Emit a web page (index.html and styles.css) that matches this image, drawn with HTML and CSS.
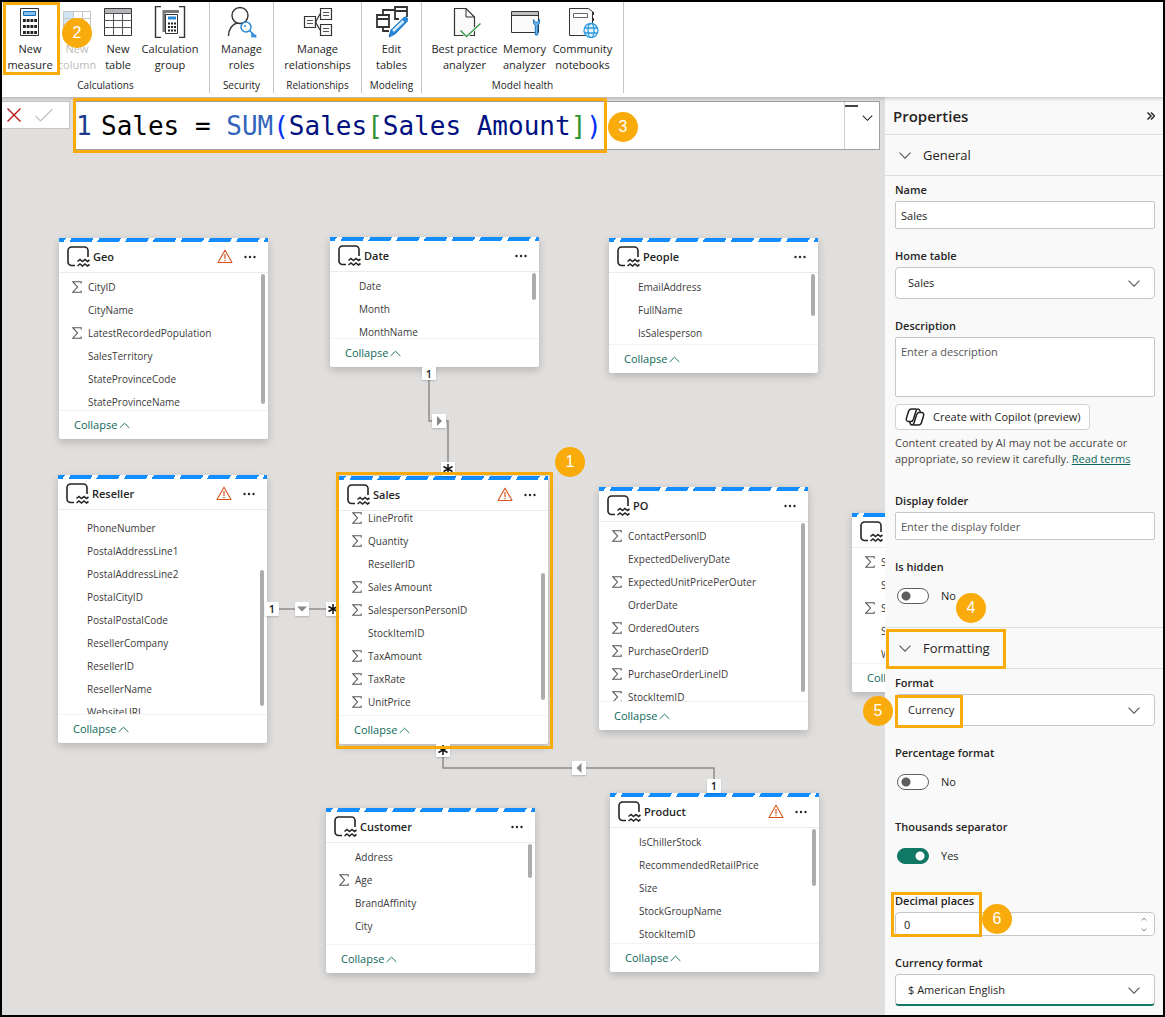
FILE: index.html
```html
<!DOCTYPE html>
<html lang="en">
<head>
<meta charset="utf-8">
<title>Model view</title>
<link rel="stylesheet" href="styles.css">
</head>
<body>
<svg class="sprite" aria-hidden="true">
  <symbol id="i-table" viewBox="0 0 24 22"><g fill="none" stroke="#252423" stroke-width="1.6"><path d="M21 11V4.500a3.500 3.500 0 0 0-3.500-3.500H4.500A3.500 3.500 0 0 0 1 4.500V16a3.500 3.500 0 0 0 3.500 3.500H8"/><path d="M10.500 15.500l2.500-2 2.500 2 2.500-2 2.500 2 2-1.500M10.500 20l2.500-2 2.500 2 2.500-2 2.500 2 2-1.500"/></g></symbol>
  <symbol id="i-warn" viewBox="0 0 16 15"><path d="M8 1.200L15 13.500H1z" fill="none" stroke="#d9531e" stroke-width="1.100" stroke-linejoin="round"/><path d="M8 5v5M8 11v1.300" stroke="#d9531e" stroke-width="1.200"/></symbol>
  <symbol id="i-dots" viewBox="0 0 12 4"><g fill="#252423"><circle cx="1.500" cy="2" r="1.200"/><circle cx="6" cy="2" r="1.200"/><circle cx="10.500" cy="2" r="1.200"/></g></symbol>
  <symbol id="i-sigma" viewBox="0 0 10 12"><path d="M9.200 2.500V.700H.800L5.500 6 .800 11.200H9.200V9.500" fill="none" stroke="#555" stroke-width="1.100"/></symbol>
  <symbol id="i-up" viewBox="0 0 12 7"><path d="M.700 6.200L6 1l5.300 5.200" fill="none" stroke="currentColor" stroke-width="1"/></symbol>
  <symbol id="i-down" viewBox="0 0 12 7"><path d="M.500.700L6 6.200 11.500.700" fill="none" stroke="currentColor" stroke-width="1.200"/></symbol>
  <symbol id="i-star" viewBox="0 0 10 10"><path d="M5 0v10M.500 2.500l9 5M9.500 2.500l-9 5" stroke="#111" stroke-width="1.500"/></symbol>
</svg>

<div class="app">
  <header class="ribbon">
    <section class="group group-calculations">
      <div class="tools">
        <button class="tool"><svg class="tool-icon" viewBox="0 0 32 32"><path d="M6.500 2.500h18v27h-18z" fill="#fff" stroke="#333"/><path d="M9.500 5.500h12v4h-12z" fill="#83beec" stroke="#0f6cbd"/><path d="M9 14.500h14M9 20.500h14M9 26.500h14" stroke="#222" stroke-width="3" stroke-dasharray="2.800 .930"/></svg>New<br>measure</button>
        <button class="tool" disabled><svg class="tool-icon" viewBox="0 0 32 32"><path d="M2.500 5.500h27v24h-27z" fill="#fff" stroke="#c8c6c4"/><path d="M3 6h9v23H3z" fill="#cfe4f7"/><path d="M12.500 5v25M21.500 5v25M2 12.500h28M2 21.500h28" stroke="#c8c6c4"/></svg>New<br>column</button>
        <button class="tool"><svg class="tool-icon" viewBox="0 0 32 32"><path d="M2.500 2.500h27v27h-27z" fill="#fff" stroke="#333"/><path d="M3 3h26v4H3z" fill="#b5b2b8"/><path d="M2 7.500h28M11.500 7v23M20.500 7v23M2 14.500h28M2 21.500h28" stroke="#555" fill="none"/></svg>New<br>table</button>
        <button class="tool"><svg class="tool-icon" viewBox="0 0 32 32"><path d="M7 .500H1.500v31H7M25 .500h5.500v31H25" fill="none" stroke="#333" stroke-width="1.400"/><path d="M10 26V5.500h15" fill="none" stroke="#777" stroke-width="3"/><path d="M11.500 8.500h12v19h-12z" fill="#fff" stroke="#333"/><path d="M14 10.500h8v3h-8z" fill="#2b88d8"/><path d="M14 17.500h8M14 21h8M14 24.500h8" stroke="#222" stroke-width="2" stroke-dasharray="2 1"/></svg>Calculation<br>group</button>
      </div>
      <h2 class="caption">Calculations</h2>
    </section>
    <section class="group group-security">
      <div class="tools">
        <button class="tool"><svg class="tool-icon" viewBox="0 0 32 32"><g fill="none" stroke="#333" stroke-width="1.400"><circle cx="15" cy="9.500" r="8"/><path d="M3.500 30c0-7 4-12 9-13"/></g><path d="M24.500 24.500l6 6v-1.800M27 27.500v3h3" stroke="#2b88d8" stroke-width="1.600" fill="none"/><circle cx="21" cy="21" r="5" fill="#fff" stroke="#2b88d8" stroke-width="1.500"/><circle cx="20" cy="20" r="1" fill="#2b88d8"/></svg>Manage<br>roles</button>
      </div>
      <h2 class="caption">Security</h2>
    </section>
    <section class="group group-relationships">
      <div class="tools">
        <button class="tool"><svg class="tool-icon" viewBox="0 0 32 32"><g fill="#fafafa" stroke="#333" stroke-width="1.200"><path d="M2.500 10.500h11v11h-11zM18.500 2.500h11v11h-11zM18.500 18.500h11v11h-11z"/><path d="M13.500 16L18 8M13.500 16l4.500 8M14 14v4" fill="none"/></g><path d="M5 14.500h6M5 17.500h6M21 6.500h6M21 9.500h6M21 22.500h6M21 25.500h6" stroke="#555"/></svg>Manage<br>relationships</button>
      </div>
      <h2 class="caption">Relationships</h2>
    </section>
    <section class="group group-modeling">
      <div class="tools">
        <button class="tool"><svg class="tool-icon" viewBox="0 0 32 32"><g fill="none" stroke="#333" stroke-width="1.800"><path d="M1 9h12v12H1zM1 13h12M7 9V4h12M19 9V1h12v10M19 5h12M7 21v4h6M19 9v4h4"/></g><path d="M13 31l2-7L28 11.500c2-1.500 5 1.500 3.500 3.500L19 28z" fill="#2b88d8" stroke="#1976c5"/><path d="M17 25L27.500 15" stroke="#d4ebfb" stroke-width="2.500"/></svg>Edit<br>tables</button>
      </div>
      <h2 class="caption">Modeling</h2>
    </section>
    <section class="group group-health">
      <div class="tools">
        <button class="tool"><svg class="tool-icon" viewBox="0 0 32 32"><path d="M5.500 2.500H17l8.500 8.500v18.500h-20z" fill="#fafafa" stroke="#333" stroke-width="1.200"/><path d="M17 2.500V11h8.500" fill="none" stroke="#333"/><path d="M11.500 24.500l6 6 14-13" fill="none" stroke="#fff" stroke-width="3"/><path d="M11.500 24.500l6 6 14-13" fill="none" stroke="#3a9b4a" stroke-width="1.500"/></svg>Best practice<br>analyzer</button>
        <button class="tool"><svg class="tool-icon" viewBox="0 0 32 32"><path d="M2.500 5.500h27v21h-27z" fill="#fafafa" stroke="#333"/><path d="M3 6h26v3H3z" fill="#c0bec0"/><path d="M2 9.500h28" stroke="#333"/><path d="M24.500 13.500v3a3 3 0 0 0 1.800 2.700V29h2.400v-9.800a3 3 0 0 0 1.800-2.700v-3l-1.800 2.800h-2.400z" fill="#6fb5ea" stroke="#1976c5"/></svg>Memory<br>analyzer</button>
        <button class="tool"><svg class="tool-icon" viewBox="0 0 32 32"><path d="M2.500 2.500h19l4 3v24h-23z" fill="#fafafa" stroke="#333"/><path d="M6.500 7.500h14v4h-14z" fill="#fff" stroke="#666"/><path d="M26 6v3M26 12v3" stroke="#333" stroke-width="2"/><g fill="#e6f3fc" stroke="#2b9be0" stroke-width="1.300"><circle cx="24" cy="24.500" r="7"/><ellipse cx="24" cy="24.500" rx="3" ry="7"/><path d="M17.500 22h13M17.500 27h13" fill="none"/></g></svg>Community<br>notebooks</button>
      </div>
      <h2 class="caption">Model health</h2>
    </section>
    <span class="mark mark-measure"></span>
    <span class="badge badge-2">2</span>
  </header>

  <div class="workspace">
    <main class="stage">
      <div class="formula-row">
        <div class="formula-actions">
          <button aria-label="Cancel"><svg class="act" viewBox="0 0 18 18"><path d="M2.500 2.500l13 13M15.500 2.500l-13 13" stroke="#b80f0f" stroke-width="1.300"/></svg></button>
          <button aria-label="Commit"><svg class="act" viewBox="0 0 18 18"><path d="M.500 10l5 5 12-12" stroke="#c0c0c0" stroke-width="1.200" fill="none"/></svg></button>
        </div>
        <div class="formula">
          <span class="line-no">1</span>
          <code>Sales = <span class="fn">SUM</span><span class="paren">(</span><span class="ref">Sales</span><span class="bracket">[</span><span class="ref">Sales Amount</span><span class="bracket">]</span><span class="paren">)</span></code>
          <button class="formula-more" aria-label="Expand formula bar"><svg class="chev-sm"><use href="#i-down"/></svg></button>
        </div>
      </div>

      <svg class="links" aria-hidden="true"><g fill="none" stroke="#8f8d8b" stroke-width="1.500"><path d="M429 280V324H448V370"/><path d="M275 512H330"/><path d="M443 655V671H714V690"/></g></svg>

      <article class="card geo">
        <header><svg class="t-icon"><use href="#i-table"/></svg><h3>Geo</h3><svg class="warn"><use href="#i-warn"/></svg><button aria-label="More"><svg class="dots"><use href="#i-dots"/></svg></button></header>
        <ul><li><svg><use href="#i-sigma"/></svg>CityID</li><li>CityName</li><li><svg><use href="#i-sigma"/></svg>LatestRecordedPopulation</li><li>SalesTerritory</li><li>StateProvinceCode</li><li>StateProvinceName</li></ul>
        <span class="thumb"></span>
        <footer><button>Collapse <svg><use href="#i-up"/></svg></button></footer>
      </article>

      <article class="card date">
        <header><svg class="t-icon"><use href="#i-table"/></svg><h3>Date</h3><button aria-label="More"><svg class="dots"><use href="#i-dots"/></svg></button></header>
        <ul><li>Date</li><li>Month</li><li>MonthName</li></ul>
        <span class="thumb"></span>
        <footer><button>Collapse <svg><use href="#i-up"/></svg></button></footer>
      </article>

      <article class="card people">
        <header><svg class="t-icon"><use href="#i-table"/></svg><h3>People</h3><button aria-label="More"><svg class="dots"><use href="#i-dots"/></svg></button></header>
        <ul><li>EmailAddress</li><li>FullName</li><li>IsSalesperson</li></ul>
        <span class="thumb"></span>
        <footer><button>Collapse <svg><use href="#i-up"/></svg></button></footer>
      </article>

      <article class="card reseller">
        <header><svg class="t-icon"><use href="#i-table"/></svg><h3>Reseller</h3><svg class="warn"><use href="#i-warn"/></svg><button aria-label="More"><svg class="dots"><use href="#i-dots"/></svg></button></header>
        <ul><li>PhoneNumber</li><li>PostalAddressLine1</li><li>PostalAddressLine2</li><li>PostalCityID</li><li>PostalPostalCode</li><li>ResellerCompany</li><li>ResellerID</li><li>ResellerName</li><li>WebsiteURL</li></ul>
        <span class="thumb"></span>
        <footer><button>Collapse <svg><use href="#i-up"/></svg></button></footer>
      </article>

      <article class="card sales">
        <header><svg class="t-icon"><use href="#i-table"/></svg><h3>Sales</h3><svg class="warn"><use href="#i-warn"/></svg><button aria-label="More"><svg class="dots"><use href="#i-dots"/></svg></button></header>
        <ul><li><svg><use href="#i-sigma"/></svg>LineProfit</li><li><svg><use href="#i-sigma"/></svg>Quantity</li><li>ResellerID</li><li><svg><use href="#i-sigma"/></svg>Sales Amount</li><li><svg><use href="#i-sigma"/></svg>SalespersonPersonID</li><li>StockItemID</li><li><svg><use href="#i-sigma"/></svg>TaxAmount</li><li><svg><use href="#i-sigma"/></svg>TaxRate</li><li><svg><use href="#i-sigma"/></svg>UnitPrice</li></ul>
        <span class="thumb"></span>
        <footer><button>Collapse <svg><use href="#i-up"/></svg></button></footer>
      </article>

      <article class="card po">
        <header><svg class="t-icon"><use href="#i-table"/></svg><h3>PO</h3><button aria-label="More"><svg class="dots"><use href="#i-dots"/></svg></button></header>
        <ul><li><svg><use href="#i-sigma"/></svg>ContactPersonID</li><li>ExpectedDeliveryDate</li><li><svg><use href="#i-sigma"/></svg>ExpectedUnitPricePerOuter</li><li>OrderDate</li><li><svg><use href="#i-sigma"/></svg>OrderedOuters</li><li><svg><use href="#i-sigma"/></svg>PurchaseOrderID</li><li><svg><use href="#i-sigma"/></svg>PurchaseOrderLineID</li><li><svg><use href="#i-sigma"/></svg>StockItemID</li></ul>
        <span class="thumb"></span>
        <footer><button>Collapse <svg><use href="#i-up"/></svg></button></footer>
      </article>

      <article class="card edge">
        <header><svg class="t-icon"><use href="#i-table"/></svg></header>
        <ul><li><svg><use href="#i-sigma"/></svg>S</li><li>S</li><li><svg><use href="#i-sigma"/></svg>S</li><li>S</li><li>W</li></ul>
        <footer><button>Collapse <svg><use href="#i-up"/></svg></button></footer>
      </article>

      <article class="card customer">
        <header><svg class="t-icon"><use href="#i-table"/></svg><h3>Customer</h3><button aria-label="More"><svg class="dots"><use href="#i-dots"/></svg></button></header>
        <ul><li>Address</li><li><svg><use href="#i-sigma"/></svg>Age</li><li>BrandAffinity</li><li>City</li></ul>
        <span class="thumb"></span>
        <footer><button>Collapse <svg><use href="#i-up"/></svg></button></footer>
      </article>

      <article class="card product">
        <header><svg class="t-icon"><use href="#i-table"/></svg><h3>Product</h3><svg class="warn"><use href="#i-warn"/></svg><button aria-label="More"><svg class="dots"><use href="#i-dots"/></svg></button></header>
        <ul><li>IsChillerStock</li><li>RecommendedRetailPrice</li><li>Size</li><li>StockGroupName</li><li>StockItemID</li></ul>
        <span class="thumb"></span>
        <footer><button>Collapse <svg><use href="#i-up"/></svg></button></footer>
      </article>

      <span class="end date-one">1</span>
      <span class="end date-arrow"><svg viewBox="0 0 10 10"><path d="M3 0l5 5-5 5z" fill="#8a8886"/></svg></span>
      <span class="end date-many"><svg><use href="#i-star"/></svg></span>
      <span class="end reseller-one">1</span>
      <span class="end reseller-arrow"><svg viewBox="0 0 10 10"><path d="M0 2.500h10l-5 5z" fill="#8a8886"/></svg></span>
      <span class="end reseller-many"><svg><use href="#i-star"/></svg></span>
      <span class="end product-many"><svg><use href="#i-star"/></svg></span>
      <span class="end product-arrow"><svg viewBox="0 0 10 10"><path d="M7.500 0l-5 5 5 5z" fill="#8a8886"/></svg></span>
      <span class="end product-one">1</span>

      <span class="mark mark-formula"></span>
      <span class="badge badge-3">3</span>
      <span class="mark mark-sales"></span>
      <span class="badge badge-1">1</span>
    </main>

    <aside class="panel">
      <header class="panel-head"><h2>Properties</h2><button aria-label="Collapse pane"><svg class="dbl" viewBox="0 0 8 8"><path d="M.500.500L4 4 .500 7.500M4 .500L7.500 4 4 7.500" fill="none" stroke="#252423" stroke-width="1.500"/></svg></button></header>

      <button class="section-head"><svg class="chev"><use href="#i-down"/></svg>General</button>
      <div class="section">
        <div class="field"><label for="name">Name</label><input class="box" id="name" type="text" value="Sales"></div>
        <div class="field"><label for="home">Home table</label>
          <div class="pick"><select id="home"><option>Sales</option></select><svg class="chev"><use href="#i-down"/></svg></div></div>
        <div class="field"><label for="desc">Description</label><textarea class="box" id="desc" placeholder="Enter a description"></textarea>
          <button class="copilot"><svg viewBox="0 0 20 18"><g fill="none" stroke="#222" stroke-width="1.500" stroke-linejoin="round"><path d="M11.500 1H6.500C4.500 1 4 2 3.500 3.500L1.500 10c-.600 2 0 3.500 2 3.500h2.500c1.500 0 2-1 2.500-2.500L11 3c.500-1.500 1-2 2-2s1.600.600 2 2l.500 1.500"/><path d="M8.500 17h5c2 0 2.500-1 3-2.500L18.500 8c.600-2 0-3.500-2-3.500H14c-1.500 0-2 1-2.500 2.500L9 15c-.500 1.500-1 2-2 2s-1.600-.600-2-2l-.500-1.500"/></g></svg>Create with Copilot (preview)</button>
          <p class="note">Content created by AI may not be accurate or<br>appropriate, so review it carefully. <a href="#terms">Read terms</a></p></div>
        <div class="field field-folder"><label for="folder">Display folder</label><input class="box" id="folder" type="text" placeholder="Enter the display folder"></div>
        <div class="field"><label for="hidden">Is hidden</label><div class="switch"><input type="checkbox" id="hidden"><label for="hidden">No</label></div></div>
      </div>

      <button class="section-head section-format"><svg class="chev"><use href="#i-down"/></svg>Formatting</button>
      <div class="section">
        <div class="field"><label for="format">Format</label>
          <div class="pick"><select id="format"><option>Currency</option></select><svg class="chev"><use href="#i-down"/></svg></div></div>
        <div class="field"><label for="percent">Percentage format</label><div class="switch"><input type="checkbox" id="percent"><label for="percent">No</label></div></div>
        <div class="field field-after-switch"><label for="thousands">Thousands separator</label><div class="switch"><input type="checkbox" id="thousands" checked><label for="thousands">Yes</label></div></div>
        <div class="field field-after-switch"><label for="decimals">Decimal places</label>
          <div class="spin"><input id="decimals" type="number" value="0"><span class="steps"><svg viewBox="0 0 6 4"><path d="M.500 3.500L3 1l2.500 2.500" fill="none" stroke="currentColor"/></svg><svg viewBox="0 0 6 4"><path d="M.500.500L3 3 5.500.500" fill="none" stroke="currentColor"/></svg></span></div></div>
        <div class="field"><label for="currency">Currency format</label>
          <div class="pick pick-active"><select id="currency"><option>$ American English</option></select><svg class="chev"><use href="#i-down"/></svg></div></div>
      </div>

      <span class="mark mark-formatting"></span>
      <span class="badge badge-4">4</span>
      <span class="mark mark-currency"></span>
      <span class="badge badge-5">5</span>
      <span class="mark mark-decimals"></span>
      <span class="badge badge-6">6</span>
    </aside>
  </div>
</div>
</body>
</html>
```
FILE: styles.css
```css
* { box-sizing: border-box; }

body {
  margin: 0;
  font: 11px/16px "Open Sans", "Noto Sans", sans-serif;
  color: #252423;
}

h2, h3, p, ul { margin: 0; padding: 0; }
ul { list-style: none; }
svg { display: block; flex: none; }

button {
  margin: 0;
  padding: 0;
  border: 0;
  background: none;
  color: inherit;
  font: inherit;
}

.sprite { position: absolute; width: 0; height: 0; }

.app {
  position: relative;
  display: flex;
  flex-direction: column;
  min-height: 100vh;
}

/* Black frame round the whole window */
.app::after {
  content: "";
  position: absolute;
  inset: 0;
  border: 2px solid #000;
  pointer-events: none;
  z-index: 5;
}

/* Ribbon */
.ribbon {
  position: relative;
  z-index: 1;
  display: flex;
  padding: 2px 2px 4px;
  background: #fff;
  box-shadow: 0 1px 4px rgba(0, 0, 0, .25);
}

.group {
  padding: 4px 0 0;
  border-right: 1px solid #c8c6c4;
}

.tools { display: grid; justify-content: center; }
.group-calculations { width: 208px; }
.group-calculations .tools { grid-template-columns: 52px 42px 40px 64px; padding-right: 5px; }
.group-security { width: 64px; }
.group-relationships { width: 88px; }
.group-modeling { width: 60px; }
.group-health { width: 202px; }
.group-health .tools { grid-template-columns: 68px 52px 64px; }

.tool {
  display: flex;
  flex-direction: column;
  align-items: center;
  white-space: nowrap;
}
.tool:disabled { color: #bdbbb9; }
.tool-icon { width: 32px; height: 32px; margin-bottom: 3px; }

.caption {
  padding-top: 4px;
  font-size: 10px;
  font-weight: 400;
  line-height: 16px;
  text-align: center;
}

/* Workspace */
.workspace { display: flex; flex: 1; }

.stage {
  position: relative;
  flex: 1;
  overflow: hidden;
  background: #e1dfdd;
}

.formula-row {
  display: flex;
  gap: 4px;
  padding: 4px 5px 0 2px;
}

.formula-actions {
  display: flex;
  align-items: center;
  gap: 12px;
  width: 68px;
  height: 28px;
  padding-left: 3px;
  background: #fff;
  border: 1px solid #c8c6c4;
  border-left: 0;
}
.act { width: 18px; height: 18px; }

.formula {
  display: flex;
  flex: 1;
  height: 49px;
  padding-left: 1px;
  background: #fff;
  border: 1px solid #a19f9d;
  font: 26px/48px "DejaVu Sans Mono", monospace;
}
.formula code { flex: 1; font: inherit; color: #000; white-space: pre; }
.line-no { width: 25px; color: #1b3a8c; }
.fn { color: #3165bb; }
.paren { color: #0431fa; }
.ref { color: #001080; }
.bracket { color: #319331; }

.formula-more {
  display: flex;
  justify-content: flex-end;
  width: 35px;
  padding: 13px 6px 0 0;
  border-left: 1px solid #d2d0ce;
  background: linear-gradient(#444, #444) 0 3px / 13px 2px no-repeat;
}
.chev-sm { width: 11px; height: 6px; }

/* Relationship lines */
.links { position: absolute; left: 0; top: 0; width: 100%; height: 100%; }

.end {
  position: absolute;
  display: flex;
  align-items: center;
  justify-content: center;
  width: 14px;
  height: 14px;
  background: #fff;
  border-radius: 1px;
  box-shadow: 0 1px 2px rgba(0, 0, 0, .2);
  font-weight: 600;
  line-height: 14px;
}
.end svg { width: 10px; height: 10px; }
.date-one { left: 422px; top: 270px; height: 13px; }
.date-arrow { left: 432px; top: 317px; }
.date-many { left: 441px; top: 365px; }
.reseller-one { left: 265px; top: 505px; }
.reseller-arrow { left: 295px; top: 505px; }
.reseller-many { left: 326px; top: 505px; }
.product-many { left: 436px; top: 646px; }
.product-arrow { left: 572px; top: 664px; }
.product-one { left: 707px; top: 682px; }

/* Table cards, placed on the model canvas */
.card {
  position: absolute;
  display: flex;
  flex-direction: column;
  width: 209px;
  background: #fff;
  border-radius: 2px;
  box-shadow: 0 3px 9px rgba(0, 0, 0, .2);
}
.card::before {
  content: "";
  height: 4px;
  background: repeating-linear-gradient(120deg, #118dff 0 6px, #fff 6px 11px, #118dff 11px 24px);
}
.card header {
  display: flex;
  align-items: center;
  height: 31px;
  padding: 0 12px 1px 8px;
  border-bottom: 1px solid #edebe9;
}
.t-icon { width: 24px; height: 22px; }
.card h3 { flex: 1; margin-left: 2px; font-size: 11px; font-weight: 600; }
.warn { width: 16px; height: 15px; margin-right: 11px; }
.dots { width: 12px; height: 4px; }

.card ul { flex: 1; min-height: 0; padding-top: 2px; overflow: hidden; }
.card li {
  display: flex;
  align-items: center;
  gap: 6px;
  height: 23px;
  padding-left: 29px;
  color: #3b3a39;
  font-size: 10px;
}
.card li:has(svg) { padding-left: 13px; }
.card li svg { width: 10px; height: 12px; }

.card footer {
  display: flex;
  align-items: center;
  height: 29px;
  padding-left: 15px;
  border-top: 1px solid #f3f2f1;
}
.card footer button { display: flex; align-items: center; gap: 2px; color: #0c695a; }
.card footer svg { width: 11px; height: 7px; }

.thumb {
  position: absolute;
  right: 3px;
  top: 36px;
  width: 4px;
  border-radius: 2px;
  background: #adabab;
}

.geo { left: 59px; top: 141px; height: 201px; }
.geo .thumb { height: 130px; }
.date { left: 330px; top: 140px; height: 130px; }
.date .thumb { height: 27px; }
.people { left: 609px; top: 141px; height: 135px; }
.people .thumb { height: 42px; }
.reseller { left: 58px; top: 378px; height: 268px; }
.reseller ul { padding-top: 6px; }
.reseller .thumb { top: 95px; height: 136px; }
.sales { left: 339px; top: 379px; height: 268px; }
.sales ul { padding-top: 0; }
.sales li:first-child { height: 18px; padding-bottom: 4px; }
.sales .thumb { top: 97px; height: 127px; }
.po { left: 599px; top: 390px; height: 243px; }
.po .thumb { height: 169px; }
.edge { left: 852px; top: 416px; height: 179px; }
.customer { left: 326px; top: 711px; height: 165px; }
.customer .thumb { height: 34px; }
.product { left: 610px; top: 696px; height: 179px; }
.product .thumb { height: 57px; }

/* Properties panel */
.panel {
  position: relative;
  width: 280px;
  padding-right: 2px;
  background: #faf9f9;
}

.panel-head {
  display: flex;
  align-items: center;
  justify-content: space-between;
  height: 38px;
  padding: 0 8px;
  border-bottom: 1px solid #e1dfdd;
}
.panel-head h2 { font-size: 15px; font-weight: 600; line-height: 20px; }
.dbl { width: 8px; height: 8px; }

.section-head {
  display: flex;
  align-items: center;
  gap: 12px;
  width: 100%;
  height: 41px;
  padding-left: 14px;
  border-bottom: 1px solid #e1dfdd;
  font-size: 13px;
}
.section-format { height: 42px; border-top: 1px solid #e1dfdd; }
.chev { width: 12px; height: 7px; color: #605e5c; }

.section {
  display: flex;
  flex-direction: column;
  gap: 19px;
  padding: 6px 8px 23px 10px;
}
.section:last-of-type { padding-bottom: 10px; }

.field { display: flex; flex-direction: column; gap: 3px; }
.field > label { font-weight: 600; }
.field-folder { margin-top: 7px; }
.field-after-switch { margin-top: 10px; }

.box, .pick select, .spin input {
  width: 100%;
  margin: 0;
  background: #fff;
  border: 1px solid #c8c6c4;
  border-radius: 2px;
  color: #252423;
  font: inherit;
}
.box { height: 28px; padding: 0 5px; }
.box::placeholder { color: #555; opacity: 1; }
textarea.box { display: block; height: 60px; padding: 6px 5px; resize: none; }

.pick { position: relative; }
.pick select { display: block; height: 32px; padding: 0 12px; border-radius: 4px; appearance: none; }
.pick .chev { position: absolute; right: 15px; top: 13px; }
.pick-active select { border-bottom: 2px solid #117865; }

.copilot {
  display: flex;
  align-items: center;
  gap: 8px;
  align-self: flex-start;
  height: 26px;
  margin-top: 4px;
  padding: 0 8px 0 9px;
  background: #fff;
  border: 1px solid #d1d1d1;
  border-radius: 4px;
}
.copilot svg { width: 20px; height: 18px; }

.note { margin-top: 2px; color: #4a4846; white-space: nowrap; }
.note a { color: #0c695a; }

.switch { display: flex; align-items: center; gap: 12px; height: 16px; margin: 10px 0 0 2px; }
.switch input {
  appearance: none;
  width: 32px;
  height: 16px;
  margin: 0;
  border: 1px solid #605e5c;
  border-radius: 8px;
  background: radial-gradient(circle at 8px 7px, #605e5c 4px, transparent 5px) #fff;
}
.switch input:checked {
  border-color: #117865;
  background: radial-gradient(circle at 22px 7px, #fff 4px, transparent 5px) #117865;
}

.spin { position: relative; }
.spin input { display: block; height: 24px; padding: 0 8px; border-radius: 4px; appearance: textfield; }
.spin input::-webkit-inner-spin-button { appearance: none; }
.steps {
  position: absolute;
  right: 8px;
  top: 5px;
  display: grid;
  gap: 7px;
  color: #8a8886;
}
.steps svg { width: 6px; height: 4px; }

/* Numbered call-outs */
.mark { position: absolute; z-index: 2; border: 3px solid #f9ab0c; }
.badge {
  position: absolute;
  z-index: 3;
  width: 30px;
  height: 30px;
  border-radius: 50%;
  background: #f9ab0c;
  color: #fff;
  font: 16px/30px "Liberation Sans", sans-serif;
  text-align: center;
}
.mark-measure { left: 3px; top: 2px; width: 57px; height: 73px; }
.badge-2 { left: 62px; top: 18px; }
.mark-formula { left: 73px; top: 1px; width: 534px; height: 55px; }
.badge-3 { left: 608px; top: 15px; }
.mark-sales { left: 336px; top: 375px; width: 217px; height: 277px; }
.badge-1 { left: 555px; top: 350px; }
.mark-formatting { left: 1px; top: 532px; width: 120px; height: 40px; }
.badge-4 { left: 71px; top: 496px; }
.mark-currency { left: 10px; top: 598px; width: 68px; height: 33px; }
.badge-5 { left: -22px; top: 599px; }
.mark-decimals { left: 6px; top: 795px; width: 91px; height: 45px; }
.badge-6 { left: 97px; top: 807px; }
```
